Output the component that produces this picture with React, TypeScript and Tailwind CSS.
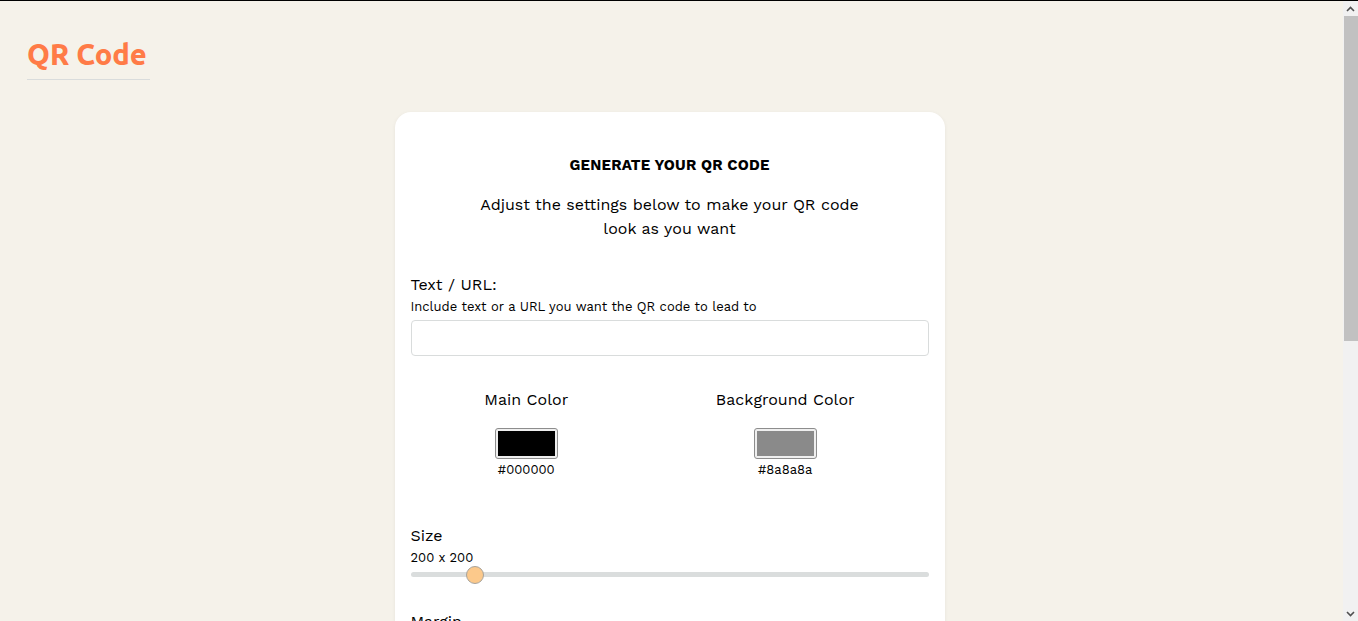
import React from "react"

const sans = { fontFamily: "'Work Sans', Lato, 'Open Sans', sans-serif" }

function Slider({ label, value, pct, top = "mt-[44px]" }: { label: string; value: string; pct: number; top?: string }) {
  return (
    <div className={top}>
      <div className="text-[16px] leading-6 text-black">{label}</div>
      <div className="text-[13px] leading-5 text-black">{value}</div>
      <div className="relative mt-[4px] h-[5px] rounded-full bg-[#dadddd]">
        <div
          className="absolute top-1/2 h-[18px] w-[18px] -translate-x-1/2 -translate-y-1/2 rounded-full border border-[#a7a39c] bg-[#fcc98b]"
          style={{ left: `${pct}%` }}
        />
      </div>
    </div>
  )
}

function ColorPick({ label, color, hex }: { label: string; color: string; hex: string }) {
  return (
    <div className="flex flex-col items-center">
      <div className="text-[16px] leading-6 text-black">{label}</div>
      <div className="mt-[16px] h-[31px] w-[63px] rounded-[3px] border border-[#8d8d8d] bg-[#efefef] p-[2px]">
        <div className="h-full w-full" style={{ background: color }} />
      </div>
      <div className="mt-[1px] text-[13px] leading-5 text-black">{hex}</div>
    </div>
  )
}

// classic scrollbar look, the headless browser hides the real one
function Scrollbar() {
  return (
    <div className="flex h-full w-[15px] shrink-0 flex-col bg-[#f1f1f1]">
      <div className="flex h-[15px] items-center justify-center">
        <svg width="9" height="6" viewBox="0 0 9 6"><path d="M1 5 L4.5 1.5 L8 5" fill="none" stroke="#505050" strokeWidth="1.6" /></svg>
      </div>
      <div className="ml-[1px] h-[325px] bg-[#c1c1c1]" />
      <div className="flex-1" />
      <div className="flex h-[15px] items-center justify-center">
        <svg width="9" height="6" viewBox="0 0 9 6"><path d="M1 1 L4.5 4.5 L8 1" fill="none" stroke="#505050" strokeWidth="1.6" /></svg>
      </div>
    </div>
  )
}

export default function App() {
  return (
    <div className="flex h-screen flex-col bg-[#f5f2ea]" style={sans}>
      <div className="h-px shrink-0 bg-black" />
      <div className="flex min-h-0 flex-1">
        <div className="min-w-0 flex-1 overflow-hidden">
          <header className="px-[27px] pt-[37px]">
            <h1
              className="inline-block border-b border-[#d9dcdc] pb-[9px] pr-[3px] text-[29px] font-extrabold leading-8 text-[#ff7b47]"
              style={{ fontFamily: "Ubuntu, 'Noto Sans', sans-serif" }}
            >
              QR Code
            </h1>
          </header>

          <main className="flex justify-center pt-[32px] pr-1 pb-[60px]">
            <div className="w-[550px] rounded-[16px] bg-white px-4 pt-[43px] pb-10 shadow-[0_1px_4px_rgba(0,0,0,0.06)]">
              <h2 className="text-center text-[15px] font-bold leading-5 tracking-[0.2px] text-black">
                GENERATE YOUR QR CODE
              </h2>
              <p className="mx-auto mt-[18px] w-[400px] text-center text-[16px] leading-6 text-black">
                Adjust the settings below to make your QR code look as you want
              </p>

              <div className="mt-[32px]">
                <div className="text-[16px] leading-6 text-black">Text / URL:</div>
                <div className="text-[13px] leading-5 text-black">Include text or a URL you want the QR code to lead to</div>
                <input className="mt-[3px] h-[36px] w-full rounded-[4px] border border-[#d9dcdc] px-3 outline-none" />
              </div>

              <div className="mt-[32px] flex justify-around">
                <ColorPick label="Main Color" color="#000000" hex="#000000" />
                <ColorPick label="Background Color" color="#8a8a8a" hex="#8a8a8a" />
              </div>

              <Slider label="Size" value="200 x 200" pct={12.4} />
              <Slider label="Margin" value="2" pct={20} top="mt-[33px]" />
              <Slider label="Error Correction" value="M" pct={33} />

              <div className="mt-[42px] flex justify-center">
                <div className="h-[200px] w-[200px] bg-[#8a8a8a]" />
              </div>

              <div className="mt-8 flex justify-center">
                <button className="rounded-[6px] bg-[#ff7b47] px-6 py-2 text-[15px] font-bold text-white">
                  Download
                </button>
              </div>
            </div>
          </main>
        </div>
        <Scrollbar />
      </div>
    </div>
  )
}
